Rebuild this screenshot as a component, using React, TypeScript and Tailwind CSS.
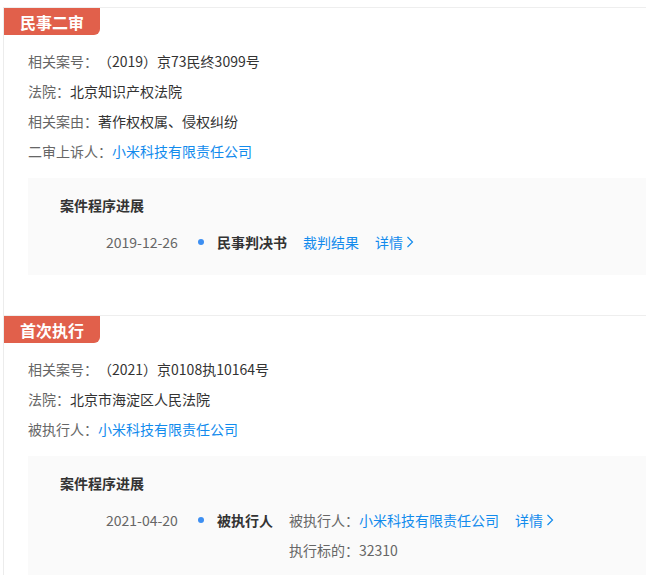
const font = { fontFamily: '"Noto Sans CJK SC", "Noto Sans", sans-serif' };

type Row = { label: string; value: string; link?: boolean };

type Step = {
  date: string;
  title: string;
  lines: { label?: string; value: string; link?: boolean; detail?: boolean }[];
};

const sections: { tag: string; rows: Row[]; steps: Step[] }[] = [
  {
    tag: "民事二审",
    rows: [
      { label: "相关案号：", value: "（2019）京73民终3099号" },
      { label: "法院：", value: "北京知识产权法院" },
      { label: "相关案由：", value: "著作权权属、侵权纠纷" },
      { label: "二审上诉人：", value: "小米科技有限责任公司", link: true },
    ],
    steps: [
      {
        date: "2019-12-26",
        title: "民事判决书",
        lines: [{ value: "裁判结果", link: true, detail: true }],
      },
    ],
  },
  {
    tag: "首次执行",
    rows: [
      { label: "相关案号：", value: "（2021）京0108执10164号" },
      { label: "法院：", value: "北京市海淀区人民法院" },
      { label: "被执行人：", value: "小米科技有限责任公司", link: true },
    ],
    steps: [
      {
        date: "2021-04-20",
        title: "被执行人",
        lines: [
          { label: "被执行人：", value: "小米科技有限责任公司", link: true, detail: true },
          { label: "执行标的：", value: "32310" },
        ],
      },
    ],
  },
];

function Chevron() {
  return (
    <svg width="8" height="12" viewBox="0 0 8 12" className="ml-[3px]">
      <polyline points="1.5,1 6.5,6 1.5,11" fill="none" stroke="#128bed" strokeWidth="1.2" />
    </svg>
  );
}

function Detail() {
  return (
    <span className="inline-flex items-center text-[#128bed]">
      详情
      <Chevron />
    </span>
  );
}

export default function App() {
  return (
    <div className="min-h-screen bg-white pt-[7px] text-[14px] [text-spacing-trim:space-all]" style={font}>
      <div className="ml-[3px] min-h-[568px] border-l border-[#ececec]">
        {sections.map((s, i) => (
          <section key={s.tag} className={"border-t border-[#eeeeee] " + (i === 0 ? "mb-[40px]" : "")}>
            <div className="inline-flex h-[27px] items-center rounded-br-[6px] bg-[#e1604b] px-4 text-[16px] font-bold text-white">
              {s.tag}
            </div>
            <div className="mt-[11px] pl-[24px]">
              {s.rows.map((r) => (
                <div key={r.label} className="h-[30px] leading-[30px]">
                  <span className="text-[#666666]">{r.label}</span>
                  <span className={r.link ? "text-[#128bed]" : "text-[#333333]"}>{r.value}</span>
                </div>
              ))}
            </div>
            <div className="ml-[24px] mt-[12px] bg-[#fafafa] pb-[23px] pl-8 pt-[17px]">
              <div className="font-bold leading-[20px] text-[#333333]">案件程序进展</div>
              {s.steps.map((st) => (
                <div key={st.date} className="mt-[17px] flex items-start leading-[20px]">
                  <div className="ml-[46px] w-[78px] text-[#666666]">{st.date}</div>
                  <div className="flex h-[20px] w-[33px] items-center justify-center">
                    <div className="h-[6px] w-[6px] rounded-full bg-[#3d8ff2]" />
                  </div>
                  <div className="mr-4 font-bold text-[#333333]">{st.title}</div>
                  <div className="flex flex-col gap-[10px]">
                    {st.lines.map((l, k) => (
                      <div key={k} className="flex items-center gap-4">
                        <span>
                          {l.label && <span className="text-[#666666]">{l.label}</span>}
                          <span className={l.link ? "text-[#128bed]" : "text-[#666666]"}>{l.value}</span>
                        </span>
                        {l.detail && <Detail />}
                      </div>
                    ))}
                  </div>
                </div>
              ))}
            </div>
          </section>
        ))}
      </div>
    </div>
  );
}
